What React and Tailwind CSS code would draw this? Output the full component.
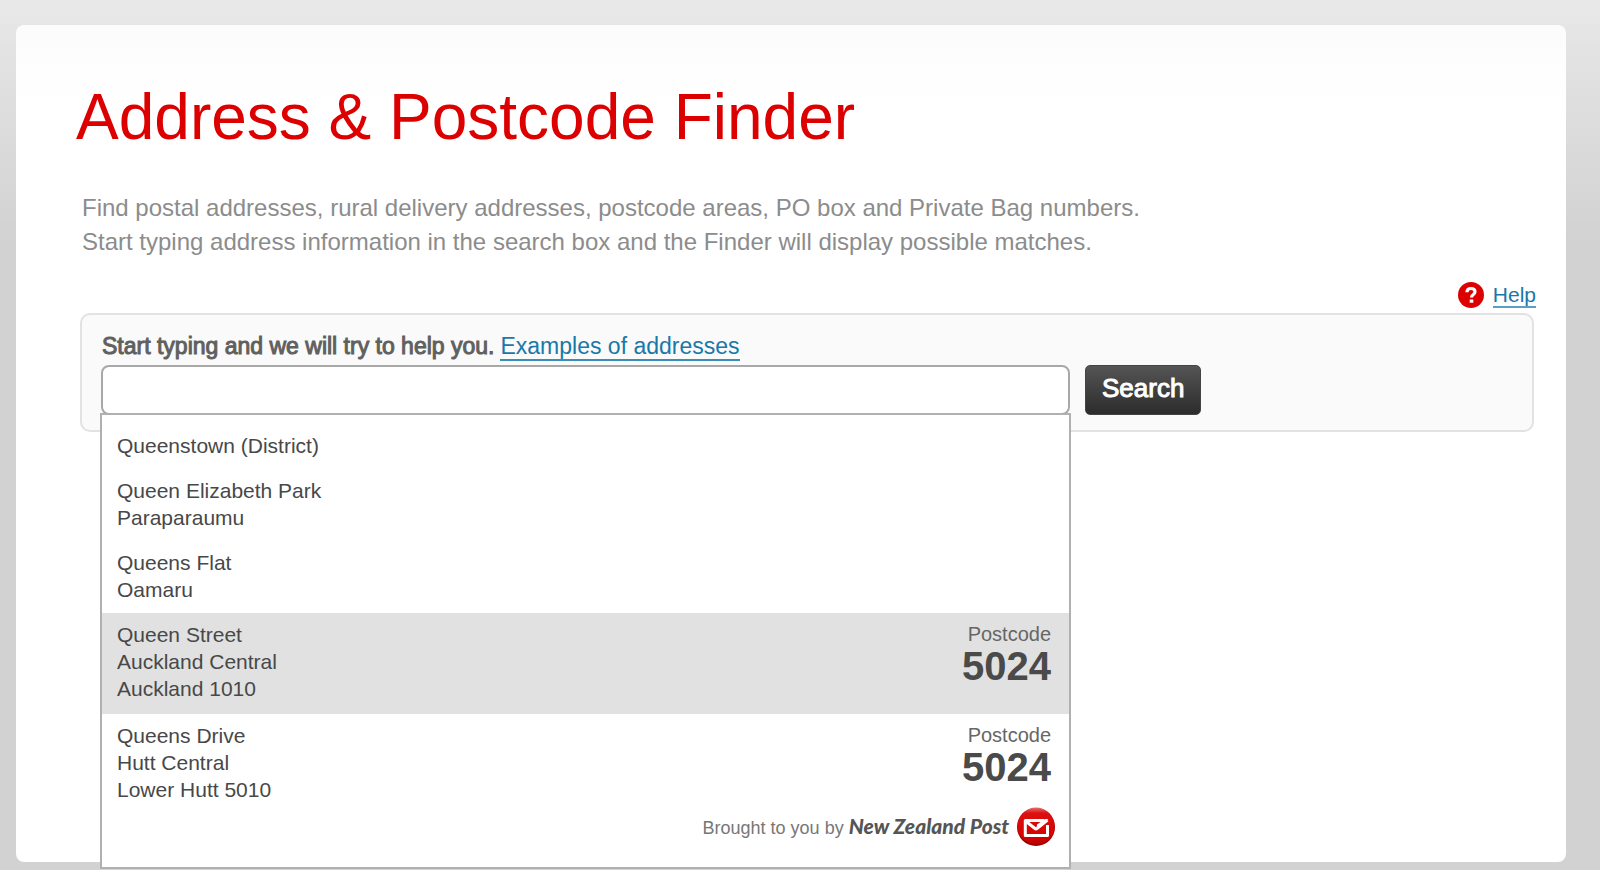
import { useState } from "react";

const suggestions = [
  { lines: ["Queenstown (District)"] },
  { lines: ["Queen Elizabeth Park", "Paraparaumu"] },
  { lines: ["Queens Flat", "Oamaru"] },
  {
    lines: ["Queen Street", "Auckland Central", "Auckland 1010"],
    postcode: "5024",
  },
  {
    lines: ["Queens Drive", "Hutt Central", "Lower Hutt 5010"],
    postcode: "5024",
  },
];

function HelpIcon() {
  return (
    <svg viewBox="0 0 26 26" className="size-[26px]" aria-hidden="true">
      <circle cx="13" cy="13" r="13" fill="#dc0000" />
      <path
        d="M8.9 10.2C9 7.6 10.7 6.5 13 6.5c2.4 0 4 1.200 4 3.200 0 1.500-.8 2.200-1.900 3-1.100.8-1.600 1.400-1.600 2.900"
        fill="none"
        stroke="#fff"
        strokeWidth="3.200"
      />
      <rect x="11.700" y="17.500" width="3.600" height="3.200" fill="#fff" />
    </svg>
  );
}

function PostLogo() {
  return (
    <svg viewBox="0 0 38 40" className="h-10 w-[38px]" aria-hidden="true">
      <defs>
        <linearGradient id="disc" x1="0" y1="0" x2="0" y2="1">
          <stop offset="0" stopColor="#e87070" />
          <stop offset="0.150" stopColor="#dc1010" />
          <stop offset="0.800" stopColor="#d80000" />
          <stop offset="1" stopColor="#b80000" />
        </linearGradient>
      </defs>
      <circle cx="19" cy="20" r="19" fill="#980000" />
      <circle cx="19" cy="19" r="18.500" fill="url(#disc)" />
      <g fill="none" stroke="#fff" strokeWidth="3">
        <path d="M27 13.500H8.300v15h22.200V18" strokeLinejoin="round" />
        <path d="M8.500 14l9.500 7.500q1 .8 2 0L30.500 13" />
      </g>
      <path d="M20 17.500l8-5.500h3.500L19.500 22z" fill="#fff" />
    </svg>
  );
}

function SuggestionList({ activeIndex, onHover }) {
  return (
    <div className="absolute inset-x-0 top-full -mt-[2px] border-2 border-[#b0b0b0] bg-white pt-[9px]">
      <ul>
        {suggestions.map((item, index) => (
          <li
            key={index}
            onMouseEnter={() => onHover(index)}
            className={`flex justify-between pt-2 pr-[18px] pl-[15px] ${
              item.postcode ? "pb-3" : "pb-[10px]"
            } ${index === activeIndex ? "bg-[#e1e1e1]" : "bg-white"}`}
          >
            <div className="text-[21px] leading-[27px] text-[#484848]">
              {item.lines.map((line) => (
                <p key={line}>{line}</p>
              ))}
            </div>
            {item.postcode && (
              <div className="text-right text-[#4a4a4a]">
                <p className="text-[20px] leading-[26px] text-[#666]">
                  Postcode
                </p>
                <p className="text-[40px] leading-[38px] font-bold">
                  {item.postcode}
                </p>
              </div>
            )}
          </li>
        ))}
      </ul>

      {/* Branding */}
      <div className="-mt-2 flex items-center justify-end gap-2 pr-[14px] pb-5">
        <p className="text-[18px] leading-[20px] text-[#777]">
          Brought to you by{" "}
          <span className="font-[Lato] text-[21px] font-black text-[#555] italic">
            New Zealand Post
          </span>
        </p>
        <PostLogo />
      </div>
    </div>
  );
}

export default function App() {
  const [query, setQuery] = useState("");
  const [activeIndex, setActiveIndex] = useState(3);

  return (
    <div className="flex min-h-screen flex-col bg-[#d2d2d2] bg-[linear-gradient(#e9e9e9,#e4e4e4_40px,#d2d2d2_240px)] pt-[25px] pr-[34px] pb-2 pl-4 font-['Liberation_Sans',Arial,sans-serif]">
      <main className="flex-1 rounded-lg bg-white bg-[linear-gradient(#fcfcfc,#ffffff_80px)] pr-8 pl-16">
        <h1 className="-ml-1 pt-[54px] text-[64px] leading-[76px] text-[#dc0000]">
          Address &amp; Postcode Finder
        </h1>
        <p className="mt-9 pl-[2px] text-[24px] leading-[34px] text-[#8c8c8c]">
          Find postal addresses, rural delivery addresses, postcode areas, PO
          box and Private Bag numbers.
          <br />
          Start typing address information in the search box and the Finder
          will display possible matches.
        </p>

        {/* Help link */}
        <div className="mt-[23px] -mr-[2px] flex items-center justify-end gap-[9px]">
          <HelpIcon />
          <a
            href="#help"
            className="border-b-2 border-[#5aa0c4] text-[21px] leading-[23px] text-[#1878a8]"
          >
            Help
          </a>
        </div>

        {/* Search box */}
        <form
          onSubmit={(e) => e.preventDefault()}
          className="mt-[5px] rounded-[10px] border-2 border-[#e2e2e2] bg-[#fafafa] pt-[19px] pr-1 pb-[15px] pl-[18px]"
        >
          <div className="flex gap-[6px] pl-[2px] text-[23px] leading-[25px]">
            <label
              htmlFor="address"
              className="text-[#606060] [-webkit-text-stroke:1px_#606060]"
            >
              Start typing and we will try to help you.
            </label>
            <a
              href="#examples"
              className="border-b-2 border-[#3a8fb8] text-[#1878a8]"
            >
              Examples of addresses
            </a>
          </div>
          <div className="mt-1 flex gap-[14px]">
            <div className="relative w-[68%] px-px">
              <input
                id="address"
                type="text"
                autoComplete="off"
                value={query}
                onChange={(e) => setQuery(e.target.value)}
                className="block h-[50px] w-full rounded-lg border-2 border-[#a8a8a8] bg-white px-3 text-[23px] outline-none"
              />
              <SuggestionList
                activeIndex={activeIndex}
                onHover={setActiveIndex}
              />
            </div>
            <button
              type="submit"
              className="h-[50px] rounded-[5px] border border-[#444] bg-linear-to-b from-[#555] to-[#2c2c2c] px-4 pb-1 text-[26px] text-white [-webkit-text-stroke:1px_#fff]"
            >
              Search
            </button>
          </div>
        </form>
      </main>
    </div>
  );
}
